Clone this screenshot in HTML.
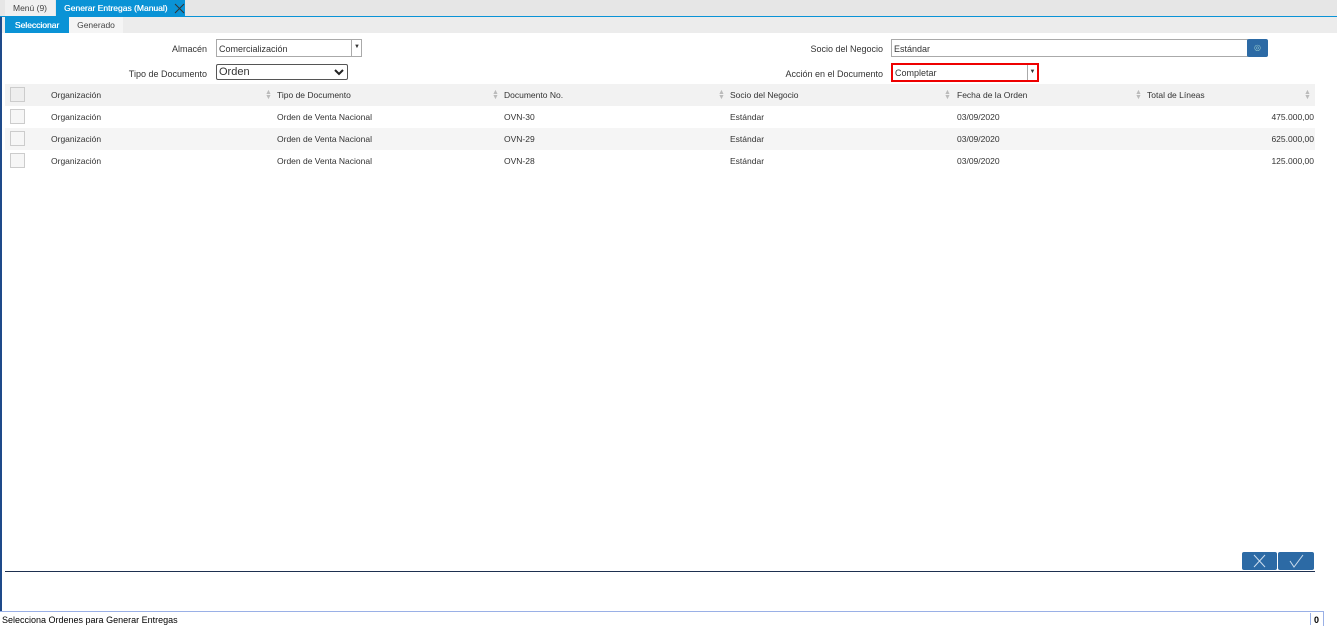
<!DOCTYPE html>
<html><head><meta charset="utf-8"><style>
*{box-sizing:border-box;margin:0;padding:0}
body{width:1337px;height:626px;background:#fff;font-family:"Liberation Sans",sans-serif;font-size:9px;color:#333;position:relative;overflow:hidden}
.abs{position:absolute}
.lbl{position:absolute;text-align:right;font-size:9px;color:#333}
.inp{position:absolute;border:1px solid #aaa;background:#fff;font-size:9px;padding-left:2px;line-height:16px;height:18px}
.row{position:absolute;left:5px;width:1310px;height:22px}
.cb{position:absolute;left:5px;top:3px;width:15px;height:15px;border:1px solid #ccc;background:#f6f6f6}
.c{position:absolute;top:0;line-height:22px;font-size:8.5px}
.sort{position:absolute;top:6px;width:7px;color:#bbb;font-size:7px;line-height:5px}
</style></head><body>
<div class="abs" style="left:0;top:0;width:1337px;height:16px;background:#e6e6e6"></div>
<div class="abs" style="left:5px;top:0;width:50px;height:16px;background:#f0f0f0;line-height:16px;text-align:center;font-size:8.5px;color:#444">Menú (9)</div>
<div class="abs" style="left:56px;top:0;width:129px;height:16px;background:#0a93d6;color:#fff;line-height:16px;padding-left:8px;font-size:8.5px;text-shadow:0.3px 0 0 #fff">Generar Entregas (Manual)</div>
<svg class="abs" style="left:174px;top:3px" width="11" height="11"><path d="M1 1L10 10M10 1L1 10" stroke="#333" stroke-width="1"/></svg>
<div class="abs" style="left:0;top:16px;width:1337px;height:1px;background:#0a93d6"></div>
<div class="abs" style="left:0;top:17px;width:1337px;height:16px;background:#ececec"></div>
<div class="abs" style="left:5px;top:17px;width:64px;height:16px;background:#0a93d6;color:#fff;line-height:16px;text-align:center;font-size:8.5px;text-shadow:0.3px 0 0 #fff">Seleccionar</div>
<div class="abs" style="left:69px;top:17px;width:54px;height:16px;background:#f5f5f5;line-height:16px;text-align:center;font-size:8.5px;color:#444">Generado</div>
<div class="abs" style="left:0;top:17px;width:2px;height:594px;background:#1e4a8a"></div>

<div class="lbl" style="left:100px;width:107px;top:44px">Almacén</div>
<div class="inp" style="left:216px;top:39px;width:146px;line-height:18px">Comercialización</div>
<div class="abs" style="left:351px;top:40px;width:11px;height:16px;border-left:1px solid #aaa;font-size:6px;text-align:center;line-height:14px">▼</div>
<div class="lbl" style="left:100px;width:107px;top:69px">Tipo de Documento</div>
<div class="inp" style="left:216px;top:64px;width:132px;height:16px;line-height:14px;font-size:11px;border-color:#555;border-radius:2px">Orden<svg style="position:absolute;right:3px;top:4px" width="10" height="7"><path d="M1 1L5 5L9 1" stroke="#222" stroke-width="2" fill="none"/></svg></div>

<div class="lbl" style="left:760px;width:123px;top:44px">Socio del Negocio</div>
<div class="inp" style="left:891px;top:39px;width:357px;line-height:18px">Estándar</div>
<div class="abs" style="left:1247px;top:39px;width:21px;height:18px;background:#2c6aa5;border-radius:2px;color:#9cc;font-size:8px;text-align:center;line-height:18px">◎</div>
<div class="lbl" style="left:760px;width:123px;top:69px">Acción en el Documento</div>
<div class="inp" style="left:891px;top:63px;width:148px;height:19px;border:2px solid #e00;line-height:17px">Completar</div>
<div class="abs" style="left:1027px;top:65px;width:10px;height:15px;border-left:1px solid #aaa;font-size:6px;text-align:center;line-height:14px">▼</div>

<div class="row" style="top:84px;background:#f2f2f2"><div class="cb" style="background:#eee"></div>
<div class="c" style="left:46px">Organización</div><div class="c" style="left:272px">Tipo de Documento</div><div class="c" style="left:499px">Documento No.</div><div class="c" style="left:725px">Socio del Negocio</div><div class="c" style="left:952px">Fecha de la Orden</div><div class="c" style="left:1142px">Total de Líneas</div>
<div class="sort" style="left:260px">▲<br>▼</div><div class="sort" style="left:487px">▲<br>▼</div><div class="sort" style="left:713px">▲<br>▼</div><div class="sort" style="left:939px">▲<br>▼</div><div class="sort" style="left:1130px">▲<br>▼</div><div class="sort" style="left:1299px">▲<br>▼</div></div>
<div class="row" style="top:106px"><div class="cb"></div><div class="c" style="left:46px">Organización</div><div class="c" style="left:272px">Orden de Venta Nacional</div><div class="c" style="left:499px">OVN-30</div><div class="c" style="left:725px">Estándar</div><div class="c" style="left:952px">03/09/2020</div><div class="c" style="right:1px">475.000,00</div></div>
<div class="row" style="top:128px;background:#f5f5f5"><div class="cb"></div><div class="c" style="left:46px">Organización</div><div class="c" style="left:272px">Orden de Venta Nacional</div><div class="c" style="left:499px">OVN-29</div><div class="c" style="left:725px">Estándar</div><div class="c" style="left:952px">03/09/2020</div><div class="c" style="right:1px">625.000,00</div></div>
<div class="row" style="top:150px"><div class="cb"></div><div class="c" style="left:46px">Organización</div><div class="c" style="left:272px">Orden de Venta Nacional</div><div class="c" style="left:499px">OVN-28</div><div class="c" style="left:725px">Estándar</div><div class="c" style="left:952px">03/09/2020</div><div class="c" style="right:1px">125.000,00</div></div>

<div class="abs" style="left:1242px;top:552px;width:35px;height:18px;background:#2c6aa5;border-radius:2px"><svg width="35" height="18"><path d="M12 3L23 15M23 3L12 15" stroke="#cde" stroke-width="1"/></svg></div>
<div class="abs" style="left:1278px;top:552px;width:36px;height:18px;background:#2c6aa5;border-radius:2px"><svg width="36" height="18"><path d="M12 9L16 15L25 3" stroke="#cde" stroke-width="1" fill="none"/></svg></div>
<div class="abs" style="left:5px;top:571px;width:1310px;height:1px;background:#1e3050"></div>

<div class="abs" style="left:0;top:611px;width:1324px;height:15px;border-top:1px solid #9ab0e6;border-right:1px solid #9ab0e6"></div>
<div class="abs" style="left:2px;top:615px;font-size:9px;color:#000">Selecciona Ordenes para Generar Entregas</div>
<div class="abs" style="left:1310px;top:613px;width:1px;height:12px;background:#9ab0e6"></div>
<div class="abs" style="left:1314px;top:615px;font-size:9px;font-weight:bold;color:#000">0</div>
</body></html>
